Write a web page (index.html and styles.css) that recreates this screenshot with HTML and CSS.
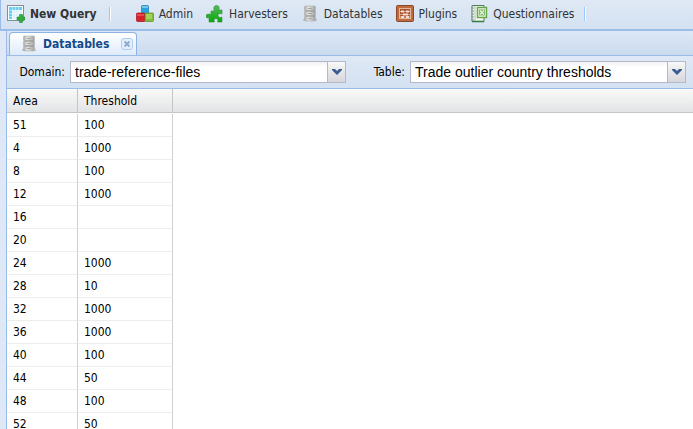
FILE: index.html
```html
<!DOCTYPE html>
<html lang="en">
<head>
<meta charset="utf-8">
<title>Datatables</title>
<link rel="stylesheet" href="styles.css">
</head>
<body>
<svg class="defs" aria-hidden="true">
  <defs>
    <linearGradient id="steel" x1="0" x2="1" y1="0" y2="0"><stop offset="0" stop-color="#aaa"/><stop offset=".35" stop-color="#e4e5e2"/><stop offset="1" stop-color="#a0a0a0"/></linearGradient>
    <linearGradient id="leaf" x1="0" x2="0" y1="0" y2="1"><stop offset="0" stop-color="#56ba58"/><stop offset="1" stop-color="#08a80c"/></linearGradient>
    <symbol id="cabinet" viewBox="0 0 18 18">
      <path d="M2 14h14v2H2z" fill="#c3c8cf"/>
      <rect x="3.500" y="1" width="11" height="5" rx="1" fill="url(#steel)" stroke="#b0b0b0" stroke-width=".6"/>
      <rect x="3.500" y="6" width="11" height="5" rx="1" fill="url(#steel)" stroke="#b0b0b0" stroke-width=".6"/>
      <rect x="3.500" y="11" width="11" height="5" rx="1" fill="url(#steel)" stroke="#b0b0b0" stroke-width=".6"/>
      <path d="M5 6h9M5 11h9" stroke="#8b8b8b" stroke-width=".8"/>
      <path d="M7 3.500h4M7 8.500h4M7 13.500h4" stroke="#a3aaa3"/>
    </symbol>
  </defs>
</svg>
<div class="app">
  <nav class="menubar">
    <button class="menu primary" type="button">
      <svg class="icon" viewBox="0 0 18 18" aria-hidden="true">
        <rect x=".5" y=".5" width="16" height="15" fill="#fff" stroke="#7d9298"/>
        <path d="M2 2h13v3H2zM2 5h3v9H2z" fill="#67cef5"/>
        <path d="M5 5h10v9H5z" fill="#d9f2fc"/>
        <path d="M2 5.500h13M2 8.500h13M2 11.500h13M5.500 2v12M8.500 2v12M11.500 2v12" stroke="#fff" stroke-opacity=".7" stroke-width=".6"/>
        <path d="M12.500 9.500h3v2.500H18v3h-2.500v2.500h-3V15H10v-3h2.500z" fill="#37ad3d" stroke="#268b36" stroke-width=".6"/>
      </svg>
      New Query
    </button>
    <span class="divider"></span>
    <div class="links">
      <button class="menu" type="button">
        <svg class="icon" viewBox="0 0 18 18" aria-hidden="true">
          <rect x="5.500" y=".5" width="7" height="8" rx="1" fill="#2ba2df" stroke="#187ab5" stroke-width=".7"/>
          <path d="M6 1h6v2H6z" fill="#73c7ef"/>
          <rect x=".5" y="8" width="8.500" height="8.500" rx="1" fill="#d9202b" stroke="#a90c1b" stroke-width=".7"/>
          <path d="M1 9h7v2H1z" fill="#e84a52"/>
          <rect x="9" y="8" width="8.500" height="8.500" rx="1" fill="#82bb3e" stroke="#578e22" stroke-width=".7"/>
          <path d="M10 9h6v5h-6z" fill="#a4d05e"/>
        </svg>
        Admin
      </button>
      <button class="menu" type="button">
        <svg class="icon" viewBox="0 0 18 18" aria-hidden="true">
          <path d="M5 6h3.500C7 3 8 .5 10.500.5S14 3 12.500 5H16v4c-2-1-4 0-4 1.500S14 13 16 12v5h-4.500c1-2 0-3.500-1.500-3.500S7.500 15 8.500 17H3v-4.500C1 13.500 0 12.500 0 11s1.500-2.500 5-1.500z" fill="url(#leaf)" stroke="#2f9137" stroke-width=".6"/>
        </svg>
        Harvesters
      </button>
      <button class="menu" type="button">
        <svg class="icon" aria-hidden="true"><use href="#cabinet"/></svg>
        Datatables
      </button>
      <button class="menu" type="button">
        <svg class="icon" viewBox="0 0 18 18" aria-hidden="true">
          <rect x=".5" y=".5" width="17" height="16" rx="1" fill="#bf6b40" stroke="#8b4829"/>
          <rect x="3.500" y="3.500" width="11" height="10" fill="#a75431" stroke="#e5b79b"/>
          <path d="M4 6.500h10M4 9.500h10M4 12h10" stroke="#d9a68b"/>
          <path d="M5 5.500h3v2H5zM10 5.500h3v2h-3zM7 8.500h5v2H7zM5 11h3v2H5zM10 11h3v2h-3z" fill="#f4ded0"/>
        </svg>
        Plugins
      </button>
      <button class="menu" type="button">
        <svg class="icon" viewBox="0 0 18 18" aria-hidden="true">
          <path d="M2 .5h12v16H2z" fill="#f0f4ef" stroke="#58795b"/>
          <path d="M5 1v15" stroke="#b5c6b4"/>
          <path d="M1 3h3M1 6h3M1 9h3M1 12h3M1 15h3" stroke="#8d9b91"/>
          <path d="M2 16.500h12" stroke="#347b47" stroke-width="1.500"/>
          <rect x="7.500" y="2.500" width="9" height="10" fill="#e6f3dc" stroke="#63a846" stroke-width="1.400"/>
          <rect x="9" y="4.500" width="6" height="6" fill="#7cb767"/>
          <path d="M10 5.500l4 4M14 5.500l-4 4" stroke="#e6f5df" stroke-width="1.200"/>
        </svg>
        Questionnaires
      </button>
    </div>
    <span class="divider"></span>
  </nav>
  <main class="panel">
    <div class="tabs">
      <div class="tab">
        <svg class="icon" aria-hidden="true"><use href="#cabinet"/></svg>
        <h1>Datatables</h1>
        <button class="close" type="button" aria-label="Close tab">
          <svg viewBox="0 0 12 12" aria-hidden="true"><rect x=".5" y=".5" width="11" height="11" rx="2.500" fill="#e5effb" stroke="#b1cbed"/><path d="M3.500 3.500l5 5M8.500 3.500l-5 5" stroke="#8fabd2" stroke-width="2"/></svg>
        </button>
      </div>
    </div>
    <form class="filters">
      <label for="domain">Domain:</label>
      <div class="combo">
        <select id="domain"><option>trade-reference-files</option></select>
        <span class="trigger"><svg viewBox="0 0 10 6" aria-hidden="true"><path d="M0 0h3l2 2 2-2h3v1L5 6 0 1z" fill="#3a5a94"/></svg></span>
      </div>
      <label for="table">Table:</label>
      <div class="combo">
        <select id="table"><option>Trade outlier country thresholds</option></select>
        <span class="trigger"><svg viewBox="0 0 10 6" aria-hidden="true"><path d="M0 0h3l2 2 2-2h3v1L5 6 0 1z" fill="#3a5a94"/></svg></span>
      </div>
    </form>
    <div class="grid">
      <table>
        <colgroup><col class="area"><col class="threshold"><col></colgroup>
        <thead><tr><th>Area</th><th>Threshold</th><td></td></tr></thead>
        <tbody>
          <tr class="gap"><td colspan="3"></td></tr>
          <tr><td>51</td><td>100</td></tr>
          <tr><td>4</td><td>1000</td></tr>
          <tr><td>8</td><td>100</td></tr>
          <tr><td>12</td><td>1000</td></tr>
          <tr><td>16</td><td></td></tr>
          <tr><td>20</td><td></td></tr>
          <tr><td>24</td><td>1000</td></tr>
          <tr><td>28</td><td>10</td></tr>
          <tr><td>32</td><td>1000</td></tr>
          <tr><td>36</td><td>1000</td></tr>
          <tr><td>40</td><td>100</td></tr>
          <tr><td>44</td><td>50</td></tr>
          <tr><td>48</td><td>100</td></tr>
          <tr><td>52</td><td>50</td></tr>
        </tbody>
      </table>
    </div>
  </main>
</div>
</body>
</html>
```
FILE: styles.css
```css
* { box-sizing: border-box; }
body {
  margin: 0;
  color: #000;
  font: 12px/14px "DejaVu Sans Condensed", "Noto Sans", sans-serif;
}
.defs { position: absolute; width: 0; height: 0; }
.app {
  display: flex;
  flex-direction: column;
  height: 100vh;
  overflow: hidden;
  background: #dfe8f6;
}
.menubar {
  display: flex;
  align-items: center;
  flex: none;
  height: 31px;
  padding: 0 0 2px 6px;
  border-left: 1px solid #99bce8;
  border-bottom: 2px solid #99bce8;
  background: linear-gradient(#dfe9f5, #d3e1f1);
}
.menu {
  display: flex;
  align-items: center;
  gap: 5px;
  padding: 0;
  border: 0;
  background: none;
  color: #333;
  font: inherit;
  white-space: nowrap;
}
.primary { padding-right: 2px; font-weight: bold; }
.icon { flex: none; width: 18px; height: 18px; }
.divider {
  width: 2px;
  height: 14px;
  margin-left: 10px;
  border-left: 1px solid #98c8ff;
  border-right: 1px solid #fff;
}
.links { display: flex; gap: 13px; margin-left: 25px; }
.panel {
  display: flex;
  flex: 1;
  flex-direction: column;
  min-height: 0;
  margin-left: 6px;
  border-left: 1px solid #99bce8;
  background: #fff;
}
.tabs {
  display: flex;
  align-items: flex-end;
  flex: none;
  height: 25px;
  padding-left: 2px;
  border-bottom: 1px solid #99bce8;
  background: linear-gradient(#dde8f5, #cbdbef);
}
.tab {
  display: flex;
  align-items: center;
  height: 23px;
  padding: 0 3px 0 10px;
  border: 1px solid #8db3e3;
  border-bottom: 0;
  border-radius: 4px 4px 0 0;
  background: linear-gradient(#fff, #deebfb);
}
.tab h1 {
  margin: 0 12px 0 5px;
  color: #15498b;
  font-size: 12px;
  line-height: 14px;
}
.close { width: 12px; height: 12px; padding: 0; border: 0; background: none; }
.close svg { display: block; }
.filters {
  display: grid;
  grid-template-columns: 56px 276px 54px 276px;
  column-gap: 5px;
  align-items: center;
  flex: none;
  height: 33px;
  padding-left: 2px;
  border-bottom: 1px solid #99bce8;
  background: linear-gradient(#dfe9f6, #d3e1f1);
}
.filters label { text-align: right; }
.combo { display: grid; grid-template-columns: 1fr 19px; height: 22px; }
.combo select {
  grid-area: 1 / 1 / 2 / 3;
  width: 100%;
  padding: 0 19px 0 4px;
  border: 1px solid #b5b8c8;
  border-radius: 0;
  appearance: none;
  background: linear-gradient(#f1f1f1, #fff 5px);
  color: #000;
  font: 14px/20px "Liberation Sans", Arial, sans-serif;
}
.trigger {
  grid-area: 1 / 2;
  display: grid;
  place-items: center;
  border: 1px solid #b5b8c8;
  background: linear-gradient(#f8f8f8, #d6d6dc);
  pointer-events: none;
}
.trigger svg { width: 10px; height: 6px; }
.grid { flex: 1; min-height: 0; overflow: hidden; }
table {
  width: 100%;
  border-collapse: separate;
  border-spacing: 0;
  table-layout: fixed;
}
.area { width: 71px; }
.threshold { width: 95px; }
th, td { padding: 0 6px; text-align: left; font-weight: normal; }
thead th, thead td {
  height: 24px;
  border-bottom: 1px solid #c5c5c5;
  background: linear-gradient(#f9f9f9, #e3e4e6);
}
th, tbody td { border-right: 1px solid #c5c5c5; }
tbody td { height: 23px; border-bottom: 1px solid #ededed; border-right-color: #d0d0d0; }
.gap td { height: 1px; padding: 0; border: 0; }
```
